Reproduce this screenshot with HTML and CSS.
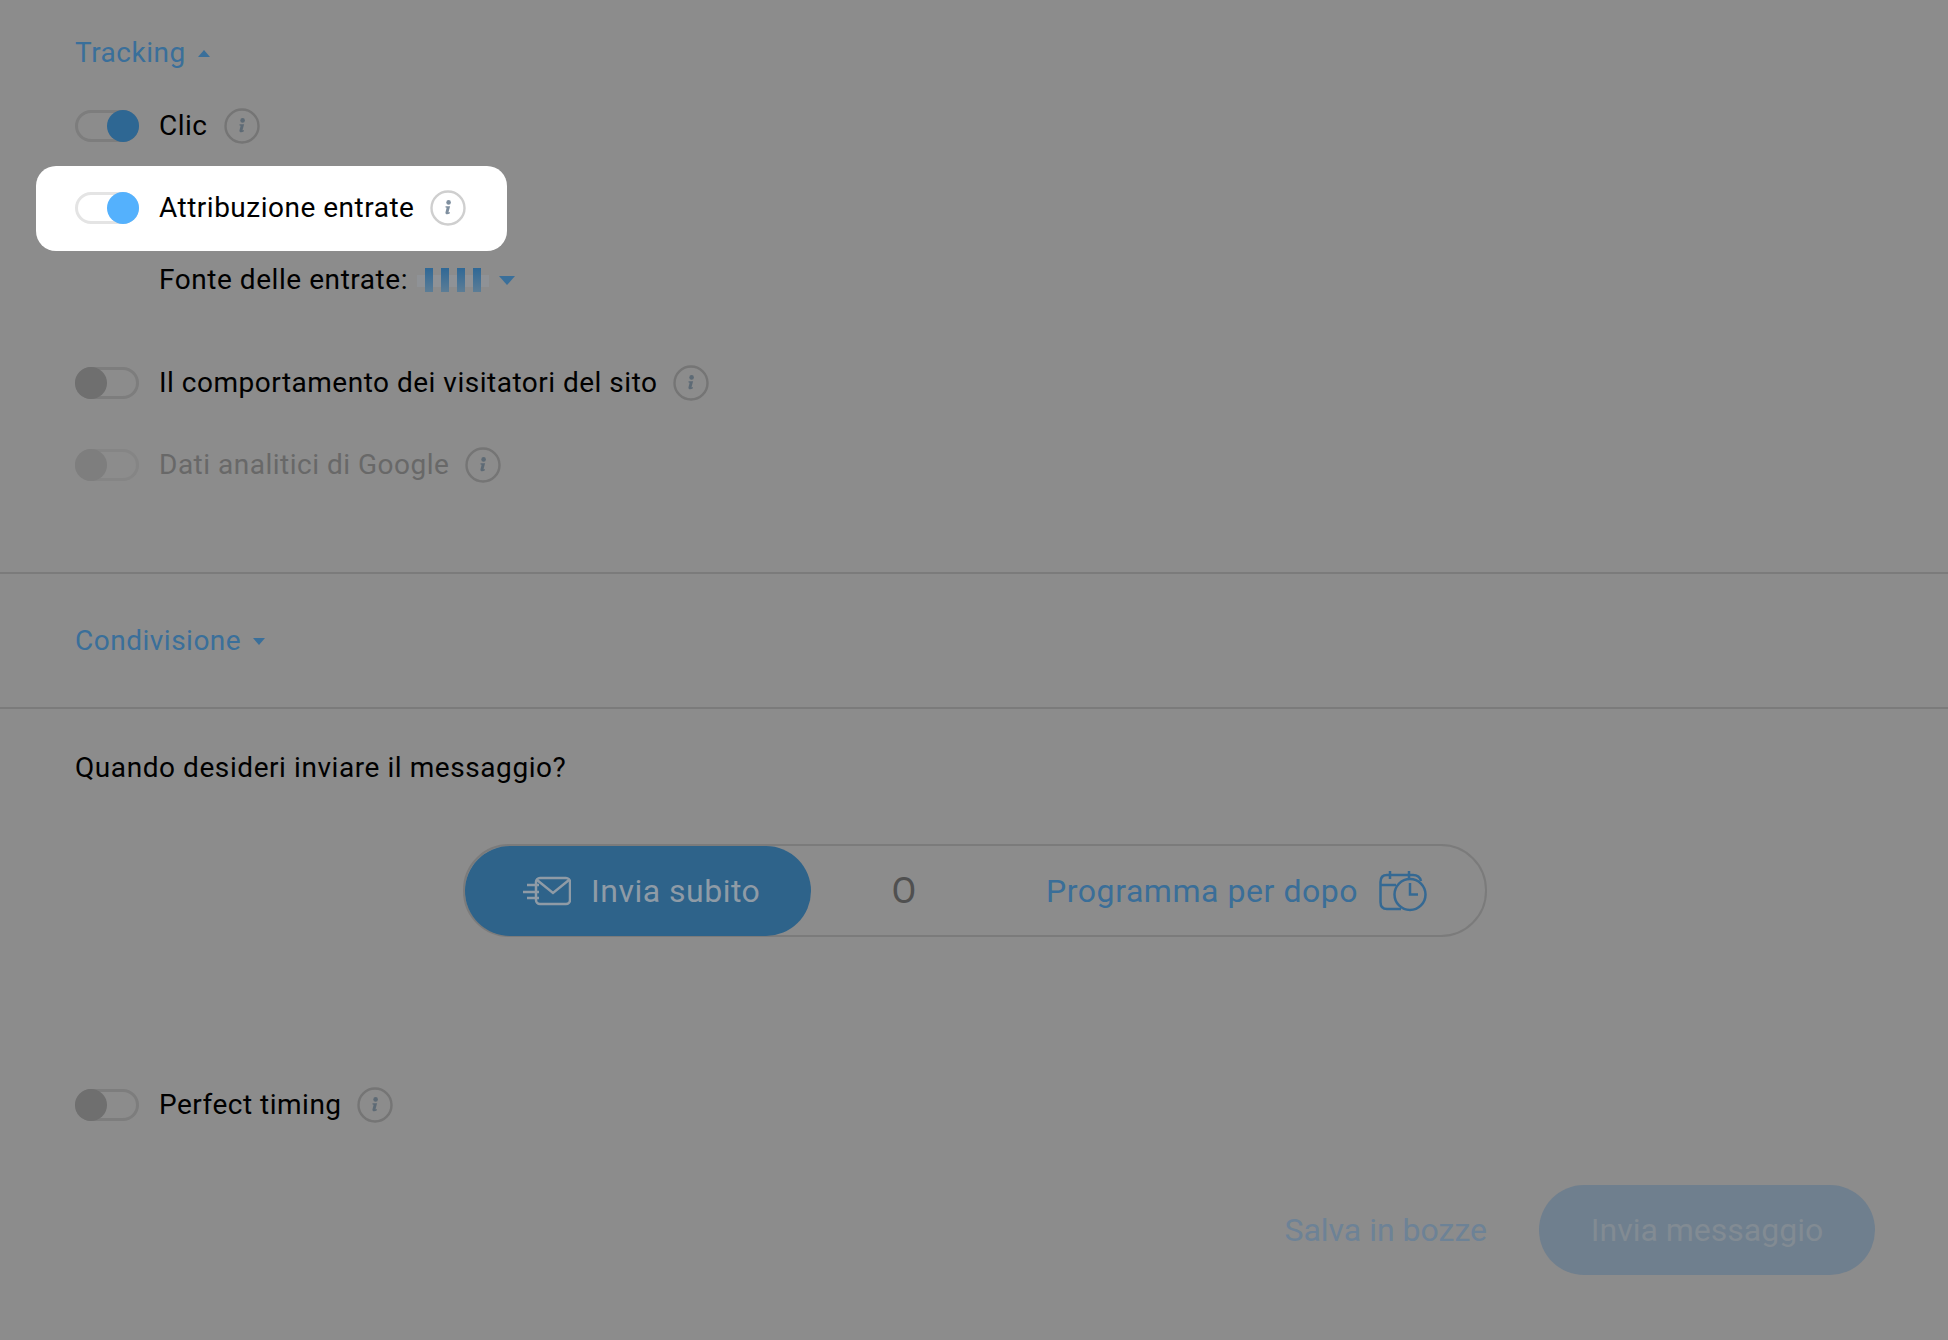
FILE: index.html
```html
<!DOCTYPE html>
<html lang="it">
<head>
<meta charset="utf-8">
<title>Tracking</title>
<link rel="stylesheet" href="styles.css">
</head>
<body>
<svg class="defs" width="0" height="0" aria-hidden="true">
  <symbol id="info" viewBox="0 0 36 36">
    <circle class="info-ring" cx="18" cy="18" r="16.500"/>
    <circle class="info-glyph" cx="18.600" cy="12.400" r="2.300"/>
    <path class="info-glyph" d="M15.500 16.200h4.600l-1.500 5.600c-.2.800.4.800 1.400.3l-.3 1.500c-2.700 1.200-4.700.6-4.200-1.400l1-3.900c.2-.8-.2-.9-1-.7z"/>
  </symbol>
</svg>
<main class="page">
  <section class="tracking">
    <h2 class="disclosure">Tracking <span class="arrow arrow-up"></span></h2>
    <div class="row row-clic">
      <span class="toggle toggle-on"></span>
      <span class="label">Clic</span>
      <svg class="info"><use href="#info"/></svg>
    </div>
    <div class="row row-spot">
      <span class="toggle toggle-spot"></span>
      <span class="label">Attribuzione entrate</span>
      <svg class="info"><use href="#info"/></svg>
    </div>
    <div class="source">
      <span class="label">Fonte delle entrate:</span>
      <span class="bars"><i></i><i></i><i></i><i></i></span>
      <span class="arrow arrow-large"></span>
    </div>
    <div class="row row-behaviour">
      <span class="toggle toggle-off"></span>
      <span class="label">Il comportamento dei visitatori del sito</span>
      <svg class="info"><use href="#info"/></svg>
    </div>
    <div class="row row-analytics">
      <span class="toggle toggle-disabled"></span>
      <span class="label label-disabled">Dati analitici di Google</span>
      <svg class="info"><use href="#info"/></svg>
    </div>
  </section>
  <section class="sharing">
    <h2 class="disclosure">Condivisione <span class="arrow arrow-down"></span></h2>
  </section>
  <section class="schedule">
    <p class="label question">Quando desideri inviare il messaggio?</p>
    <div class="pill-wrap">
      <div class="pill">
        <div class="pill-now">
          <svg class="icon-mail" viewBox="0 0 48 30" fill="none">
            <rect x="13" y="2" width="34" height="26" rx="4"/>
            <path d="M14 4l16 13L46 4M4 9h12M0 16h16M4 22h12"/>
          </svg>
          <span>Invia subito</span>
        </div>
        <span class="pill-or">O</span>
        <div class="pill-later">
          <span>Programma per dopo</span>
          <svg class="icon-cal" viewBox="0 0 48 41" fill="none">
            <path d="M42 10q-1.500-6-8-6H8Q1.500 4 1.500 11v20q0 7 6.500 7h14M11 0v8M30 0v8M1.500 14H17"/>
            <circle cx="31" cy="23.500" r="15.500"/>
            <path d="M31 12v11.500h8"/>
          </svg>
        </div>
      </div>
    </div>
    <div class="row row-timing">
      <span class="toggle toggle-off"></span>
      <span class="label">Perfect timing</span>
      <svg class="info"><use href="#info"/></svg>
    </div>
    <div class="actions">
      <button class="btn-draft" type="button">Salva in bozze</button>
      <button class="btn-send" type="button">Invia messaggio</button>
    </div>
  </section>
</main>
</body>
</html>
```
FILE: styles.css
```css
* { box-sizing: border-box; }
html, body { margin: 0; padding: 0; }
body {
  width: 1948px;
  height: 1340px;
  overflow: hidden;
  background: #8c8c8c;
  color: #000;
  font-family: Roboto, "Liberation Sans", sans-serif;
  font-size: 28px;
  letter-spacing: 0.5px;
  --ring: #757575;
  --glyph: #5d6a75;
}
.defs { position: absolute; }
.page { display: flex; flex-direction: column; }

.tracking {
  padding: 35px 0 89px 75px;
  border-bottom: 2px solid #7b7b7b;
}
.sharing {
  padding: 49px 0 48px 75px;
  border-bottom: 2px solid #7b7b7b;
}
.schedule { padding: 41px 73px 0 75px; }

.disclosure {
  margin: 0;
  height: 36px;
  display: flex;
  align-items: center;
  gap: 12px;
  color: #3a6f9a;
  font-size: 28px;
  font-weight: 400;
  line-height: 36px;
}
.arrow { display: block; width: 0; height: 0; border-style: solid; border-color: transparent; }
.arrow-up { border-width: 0 6px 7px; border-bottom-color: #3a6f9a; }
.arrow-down { border-width: 7px 6px 0; border-top-color: #3a6f9a; }
.arrow-large { border-width: 9px 8px 0; border-top-color: #3a6f9a; margin-left: 10px; }

.row { display: flex; align-items: center; height: 36px; }
.label { line-height: 36px; white-space: nowrap; }
.label-disabled { color: #686868; }
.row-clic { margin-top: 37px; }
.row-spot {
  margin: 22px 0 0 -39px;
  width: 471px;
  height: 85px;
  padding: 0 0 2px 39px;
  background: #fff;
  border-radius: 20px;
  --ring: #cfcfcf;
  --glyph: #7f8f9f;
}
.row-behaviour { margin-top: 67px; }
.row-analytics { margin-top: 46px; }
.row-timing { margin-top: 150px; }

.toggle {
  position: relative;
  display: block;
  flex: none;
  width: 64px;
  height: 32px;
  margin-right: 20px;
  border: 3px solid #7d7d7d;
  border-radius: 16px;
}
.toggle::after {
  content: "";
  position: absolute;
  top: -3px;
  width: 32px;
  height: 32px;
  border-radius: 50%;
}
.toggle-on::after { right: -3px; background: #2e6793; }
.toggle-spot { border-color: #e4e4e4; }
.toggle-spot::after { right: -3px; background: #54b1fd; }
.toggle-off::after { left: -3px; background: #6f6f6f; }
.toggle-disabled { border-color: #858585; }
.toggle-disabled::after { left: -3px; background: #7e7e7e; }

.info { flex: none; width: 36px; height: 36px; margin-left: 16px; }
.row-behaviour .info, .row-timing .info { margin-left: 15px; }
.info-ring { fill: none; stroke: var(--ring); stroke-width: 2.400; }
.info-glyph { fill: var(--glyph); }

.source { display: flex; align-items: center; height: 36px; margin: 11px 0 0 84px; letter-spacing: 0.55px; }
.bars {
  display: flex;
  gap: 8px;
  margin-left: 9px;
  padding: 0 8px;
  height: 24px;
  background: linear-gradient(transparent 30%, #8f9296 30%, #8f9296 80%, transparent 80%);
}
.bars i {
  display: block;
  width: 8px;
  height: 24px;
  background: linear-gradient(#2f6896, #5c7d96);
}

.question { margin: 0; letter-spacing: 0.57px; }
.pill-wrap { display: flex; justify-content: flex-start; margin: 58px 0 0 388px; }
.pill {
  display: flex;
  align-items: center;
  width: 1024px;
  height: 93px;
  border: 2px solid #7b7b7b;
  border-radius: 46px;
}
.pill-now {
  display: flex;
  align-items: center;
  flex: none;
  width: 346px;
  height: 90px;
  padding-left: 58px;
  gap: 20px;
  background: #2e638a;
  border-radius: 45px;
  color: #8f9ba6;
  font-size: 32px;
}
.icon-mail { width: 48px; height: 30px; flex: none; stroke: #8f9ba6; stroke-width: 2.500; }
.pill-or { width: 186px; text-align: center; font-size: 36px; color: #505050; letter-spacing: 0; }
.pill-later { display: flex; align-items: center; gap: 21px; margin-left: 49px; color: #3a6e98; font-size: 32px; letter-spacing: 0.55px; }
.icon-cal { width: 48px; height: 41px; flex: none; stroke: #356993; stroke-width: 2.500; margin-top: 2px; }

.actions { display: flex; align-items: center; justify-content: flex-end; gap: 52px; margin-top: 62px; }
.btn-draft, .btn-send {
  border: 0;
  font: inherit;
  font-size: 32px;
  letter-spacing: 0;
  padding: 0;
}
.btn-draft { background: none; color: #6d8296; }
.btn-send {
  width: 336px;
  height: 90px;
  border-radius: 45px;
  background: #6f7f8e;
  color: #828b93;
}
```
